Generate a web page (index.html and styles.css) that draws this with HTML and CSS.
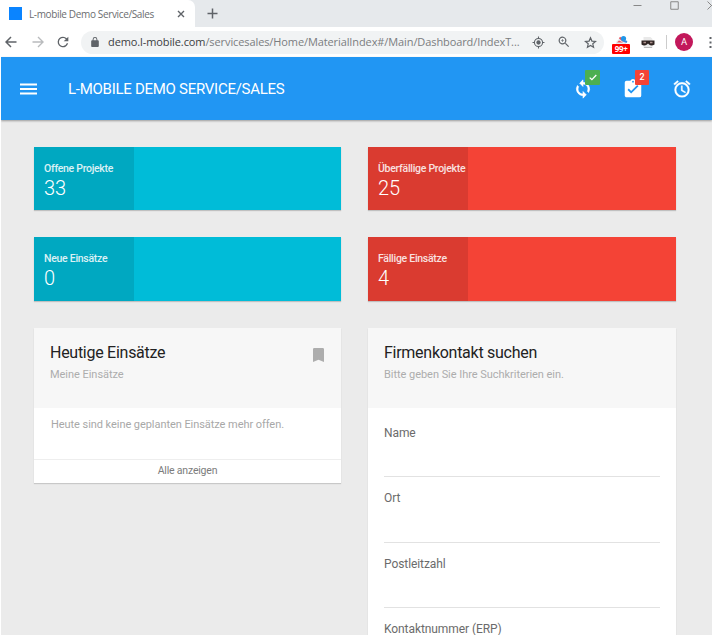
FILE: index.html
```html
<!DOCTYPE html>
<html lang="de">
<head>
<meta charset="utf-8">
<title>L-mobile Demo Service/Sales</title>
<link rel="stylesheet" href="styles.css">
</head>
<body>
<div class="window">
  <div class="tabstrip">
    <div class="tab">
      <span class="favicon"></span>
      <span class="tab-title">L-mobile Demo Service/Sales</span>
      <svg class="tab-close" width="8" height="8" viewBox="0 0 8 8"><path d="M1 1l6 6M7 1l-6 6" stroke="#5f6368" stroke-width="1.4"/></svg>
    </div>
    <svg class="new-tab" width="11" height="11" viewBox="0 0 11 11"><path d="M5.5 .5v10M.5 5.500h10" stroke="#5f6368" stroke-width="1.5"/></svg>
    <div class="window-controls">
      <svg width="9" height="11" viewBox="0 0 9 11"><path d="M.5 5.500h8" stroke="#888"/></svg>
      <svg width="9" height="9" viewBox="0 0 9 9"><path d="M.75 .75h7.500v7.500h-7.500z" fill="none" stroke="#888"/></svg>
      <svg width="5" height="9" viewBox="0 0 5 9"><path d="M.5 .5l8 8M8.500 .5l-8 8" stroke="#888"/></svg>
    </div>
  </div>
  <div class="toolbar">
    <svg class="nav-back" width="12" height="12" viewBox="0 0 12 12"><path d="M11.500 6H1.200M6 1L1 6l5 5" fill="none" stroke="#5f6368" stroke-width="1.500"/></svg>
    <svg class="nav-forward" width="12" height="12" viewBox="0 0 12 12"><path d="M.5 6h10.300M6 1l5 5-5 5" fill="none" stroke="#b9bbbd" stroke-width="1.400"/></svg>
    <svg class="nav-reload" width="16" height="16" viewBox="0 0 24 24"><path fill="#5f6368" d="M17.650 6.350A7.960 7.960 0 0 0 12 4a8 8 0 1 0 7.730 10h-2.080A6 6 0 1 1 12 6c1.660 0 3.140.69 4.220 1.780L13 11h7V4z"/></svg>
    <div class="omnibox">
      <svg class="lock" width="10" height="10" viewBox="3 1 18 21"><path fill="#5f6368" d="M18 8h-1V6A5 5 0 0 0 7 6v2H6a2 2 0 0 0-2 2v10c0 1.100.9 2 2 2h12a2 2 0 0 0 2-2V10a2 2 0 0 0-2-2zM9 8V6a3 3 0 0 1 6 0v2z"/></svg>
      <span class="url"><span class="host">demo.l-mobile.com</span>/servicesales/Home/MaterialIndex#/Main/Dashboard/IndexT...</span>
      <svg class="locate" width="13" height="13" viewBox="0 0 24 24"><g fill="none" stroke="#5f6368" stroke-width="2"><circle cx="12" cy="12" r="7.500"/><path d="M12 1v4M12 19v4M1 12h4M19 12h4"/></g><circle cx="12" cy="12" r="4" fill="#5f6368"/></svg>
      <svg class="zoom" width="12" height="12" viewBox="2 2 20 20"><path fill="#5f6368" d="M15.500 14h-.79l-.28-.27A6.500 6.500 0 1 0 13.730 14.430l.27.28v.79l5 4.990L20.490 19zM9.500 14a4.500 4.500 0 1 1 0-9 4.500 4.500 0 0 1 0 9zM10 7H9v2H7v1h2v2h1v-2h2V9h-2z"/></svg>
      <svg class="star" width="13" height="13" viewBox="0 0 24 24"><path fill="none" stroke="#5f6368" stroke-width="2.200" d="M12 3.200l2.600 6.200 6.700.6-5.100 4.400 1.500 6.500-5.700-3.400-5.700 3.400 1.500-6.500L2.700 10l6.700-.6z"/></svg>
    </div>
    <div class="extension">
      <svg width="18" height="12" viewBox="0 0 18 12"><path d="M4 7L8 3l6 4v4H4z" fill="#e6eaf0"/><path d="M5 7.500l2-2 4 2z" fill="#e8535c"/><path d="M7.500 2.500l4 3.500" stroke="#e8535c" stroke-width="2"/><circle cx="11.500" cy="3.500" r="2.600" fill="#2196e8"/><path d="M11 5.500l4 1.500" stroke="#3c8dde" stroke-width="2"/></svg>
      <span class="extension-badge">99+</span>
    </div>
    <svg class="mask" width="14" height="13" viewBox="0 0 14 13"><path d="M2.500 1h7l2 2v9h-9z" fill="#e9e9e9"/><path d="M3 11.500h8" stroke="#bbb"/><path d="M.5 4.500h13v4q-3 2-5.500 0L7 7.500 6 8.500q-3 2-5.500 0z" fill="#302523"/><path d="M2.500 6.500h2.500M9 6.500h2.500" stroke="#a98f8b" stroke-width="1.400"/></svg>
    <span class="divider"></span>
    <span class="avatar">A</span>
    <svg class="more" width="3" height="13" viewBox="0 0 3 13"><path d="M.5 1h2v2h-2zM.5 5.500h2v2h-2zM.5 10h2v2h-2z" fill="#5f6368"/></svg>
  </div>

  <header class="appbar">
    <svg class="menu" width="17" height="12" viewBox="0 0 17 12"><path d="M0 1.500h17M0 6h17M0 10.500h17" stroke="#fff" stroke-width="2"/></svg>
    <h1>L-MOBILE DEMO SERVICE/SALES</h1>
    <div class="action sync">
      <svg width="20" height="20" viewBox="0 0 24 24"><path fill="#fff" stroke="#fff" stroke-width=".7" d="M12 4V1L8 5l4 4V6a6 6 0 0 1 5.250 8.800l1.460 1.460A8 8 0 0 0 12 4zm0 14a6 6 0 0 1-5.240-8.800L5.300 7.740A8 8 0 0 0 12 20v3l4-4-4-4z"/></svg>
      <span class="badge green"><svg width="8" height="7" viewBox="0 0 8 7"><path d="M.7 3.600l2.200 2.100L7.300 1" fill="none" stroke="#fff" stroke-width="1.300"/></svg></span>
    </div>
    <div class="action tasks">
      <svg width="22" height="22" viewBox="0 0 24 24"><path fill="#fff" d="M19 3h-4.180a3 3 0 0 0-5.640 0H5a2 2 0 0 0-2 2v14c0 1.100.9 2 2 2h14a2 2 0 0 0 2-2V5a2 2 0 0 0-2-2zm-7 0a1 1 0 1 1 0 2 1 1 0 0 1 0-2zm-2 14l-4-4 1.410-1.410L10 14.170l6.590-6.590L18 9z"/></svg>
      <span class="badge red">2</span>
    </div>
    <div class="action alarm">
      <svg width="20" height="20" viewBox="0 0 24 24"><path fill="#fff" stroke="#fff" stroke-width=".4" d="M22 5.720l-4.600-3.860-1.290 1.530 4.600 3.860zM7.880 3.390L6.600 1.860 2 5.710l1.290 1.530zM12.500 8H11v6l4.750 2.850.75-1.230-4-2.370zM12 4a9 9 0 1 0 0 18 9 9 0 0 0 0-18zm0 16a7 7 0 1 1 0-14 7 7 0 0 1 0 14z"/></svg>
    </div>
  </header>

  <main class="dashboard">
    <div class="column">
      <a class="tile cyan"><div class="stat"><span class="label">Offene Projekte</span><span class="count">33</span></div></a>
      <a class="tile cyan lower"><div class="stat"><span class="label">Neue Einsätze</span><span class="count">0</span></div></a>
      <section class="card">
        <div class="card-head">
          <div><h2>Heutige Einsätze</h2><p>Meine Einsätze</p></div>
          <svg class="bookmark" width="11" height="14" viewBox="0 0 11 14"><path fill="#adadad" d="M1.300 0h8.400Q11 0 11 1.300V14l-5.500-2.300L0 14V1.300Q0 0 1.300 0z"/></svg>
        </div>
        <p class="empty">Heute sind keine geplanten Einsätze mehr offen.</p>
        <a class="show-all">Alle anzeigen</a>
      </section>
    </div>
    <div class="column">
      <a class="tile red-tile"><div class="stat"><span class="label">Überfällige Projekte</span><span class="count">25</span></div></a>
      <a class="tile red-tile lower"><div class="stat"><span class="label">Fällige Einsätze</span><span class="count">4</span></div></a>
      <section class="card search">
        <div class="card-head">
          <div><h2>Firmenkontakt suchen</h2><p>Bitte geben Sie Ihre Suchkriterien ein.</p></div>
        </div>
        <form class="fields">
          <div class="field"><label>Name</label></div>
          <div class="field"><label>Ort</label></div>
          <div class="field"><label>Postleitzahl</label></div>
          <div class="field"><label>Kontaktnummer (ERP)</label></div>
        </form>
      </section>
    </div>
  </main>
</div>
</body>
</html>
```

FILE: styles.css
```css
* { box-sizing: border-box; }
html, body { height: 637px; overflow: hidden; }
body { margin: 0; background: #fff; font-family: Roboto, "Liberation Sans", sans-serif; }
svg { display: block; flex: none; }
h1, h2, p { margin: 0; font-weight: 400; }
.window { width: 711px; height: 635px; margin-left: 1px; overflow: hidden; background: #ebebeb; display: flex; flex-direction: column; }

.tabstrip { flex: none; height: 27px; background: #e6e9ec; display: flex; align-items: center; }
.tab { width: 194px; height: 27px; background: #fff; border-radius: 0 7px 0 0; display: flex; align-items: center; padding-left: 8px; }
.favicon { width: 13px; height: 13px; background: #0a84ff; margin-right: 7px; }
.tab-title { width: 148px; font: 10px/16px "Open Sans", sans-serif; letter-spacing: -.36px; color: #6b6d70; white-space: nowrap; }
.new-tab { margin-left: 12px; }
.window-controls { margin-left: auto; display: flex; gap: 28px; align-self: flex-start; height: 10px; align-items: center; }

.toolbar { flex: none; height: 30px; background: #fff; display: flex; align-items: center; font-family: "Open Sans", sans-serif; }
.nav-back { margin-left: 4px; }
.nav-forward { margin-left: 15px; }
.nav-reload { margin-left: 11px; }
.omnibox { width: 525px; height: 23px; margin-left: 10px; border-radius: 12px; background: #f1f3f4; display: flex; align-items: center; }
.lock { margin: 0 8px 0 9px; }
.url { width: 424px; font-size: 11px; line-height: 18px; letter-spacing: -.1px; color: #7b7d80; white-space: nowrap; }
.host { color: #3c4043; }
.zoom { margin-left: 13px; }
.star { margin-left: 14px; }
.extension { position: relative; width: 18px; height: 23px; margin-left: 8px; padding-top: 4px; }
.extension-badge { position: absolute; left: 0; top: 13px; width: 18px; height: 10px; background: #f00; color: #fff; font: 700 8px/10px "Open Sans", sans-serif; text-align: center; border-radius: 1px; letter-spacing: -.3px; }
.mask { margin-left: 11px; }
.divider { width: 1px; height: 14px; margin-left: 11px; background: #ccc; }
.avatar { width: 18px; height: 18px; margin-left: 8px; border-radius: 50%; background: #c2185b; color: #fff; font: 9.500px/18px Roboto, sans-serif; text-align: center; }
.more { margin-left: 16px; }

.appbar { flex: none; height: 63px; background: #2196f3; box-shadow: 0 1px 2px rgba(0,0,0,.35); display: flex; align-items: center; position: relative; }
.menu { margin: 1px 0 0 19px; }
.appbar h1 { margin-left: 31px; width: 505px; font-size: 15px; line-height: 20px; color: #fff; letter-spacing: -.27px; white-space: nowrap; }
.action { position: relative; }
.badge { position: absolute; height: 15px; display: flex; align-items: center; justify-content: center; color: #fff; font-size: 9px; font-weight: 500; border-radius: 1px; }
.green { left: 12px; top: -9px; width: 15px; background: #4caf50; }
.red { left: 13px; top: -8px; width: 14px; background: #f44336; }
.tasks { margin-left: 29px; }
.alarm { margin-left: 28px; }

.dashboard { display: flex; gap: 27px; padding: 27px 0 0 33px; }
.column { width: 307px; }
.column + .column { width: 308px; }
.tile { display: block; height: 63px; margin-bottom: 27px; box-shadow: 0 1px 1px rgba(0,0,0,.18); }
.tile.lower { height: 64px; }
.cyan { background: #00bcd8; }
.red-tile { background: #f44336; }
.stat { width: 100px; height: 100%; padding: 14px 0 0 10px; background: rgba(0,0,0,.105); display: flex; flex-direction: column; color: #fff; }
.label { font-size: 10.500px; line-height: 16px; font-weight: 500; letter-spacing: -.28px; opacity: .85; white-space: nowrap; }
.count { font-size: 20px; line-height: 23px; font-weight: 300; }

.card { background: #fff; box-shadow: 0 1px 1px rgba(0,0,0,.15); }
.search { height: 400px; }
.card-head { height: 80px; background: #f7f7f7; padding: 15px 17px 0 16px; display: flex; justify-content: space-between; }
.card-head h2 { font-size: 16px; line-height: 20px; letter-spacing: -.27px; color: #222; white-space: nowrap; }
.card-head p { margin-top: 4px; font-size: 11px; line-height: 15px; letter-spacing: -.04px; color: #adadad; white-space: nowrap; }
.bookmark { margin-top: 5px; }
.empty { height: 51px; padding: 9px 17px; font-size: 11px; line-height: 15px; letter-spacing: -.06px; color: #a8a8a8; white-space: nowrap; }
.show-all { display: block; height: 24px; border-top: 1px solid #eee; text-align: center; font-size: 10.500px; line-height: 22px; letter-spacing: -.2px; color: #7c7c7c; }
.fields { padding: 4px 16px 0; }
.field { height: 65.300px; border-bottom: 1px solid #e2e2e2; padding-top: 13px; font-size: 12px; line-height: 17px; letter-spacing: -.08px; color: #6b6b6b; }
```
